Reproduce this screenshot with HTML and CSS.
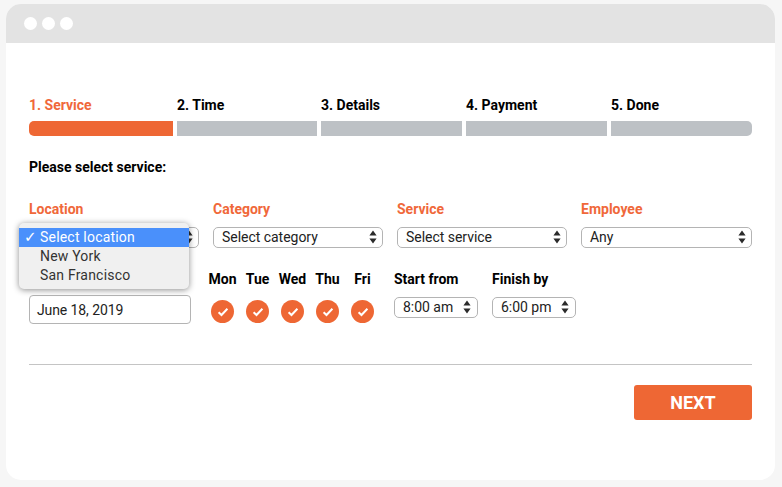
FILE: index.html
```html
<!DOCTYPE html>
<html lang="en">
<head>
<meta charset="utf-8">
<title>Booking</title>
<link rel="stylesheet" href="styles.css">
</head>
<body>
<svg class="defs" width="0" height="0" aria-hidden="true">
  <symbol id="arrows" viewBox="0 0 8 14"><path d="M4 0.5 7.6 5.6H0.4ZM4 13.5 0.4 8.4H7.6Z"/></symbol>
  <symbol id="tick" viewBox="0 0 12 10"><path d="M1.6 5.2 4.5 8 10.4 1.8" fill="none" stroke="#fff" stroke-width="2"/></symbol>
</svg>
<main class="window">
  <header class="titlebar">
    <span class="dot"></span><span class="dot"></span><span class="dot"></span>
  </header>
  <div class="content">
    <ol class="steps">
      <li class="step active"><span class="step-label">1. Service</span><span class="step-bar"></span></li>
      <li class="step"><span class="step-label">2. Time</span><span class="step-bar"></span></li>
      <li class="step"><span class="step-label">3. Details</span><span class="step-bar"></span></li>
      <li class="step"><span class="step-label">4. Payment</span><span class="step-bar"></span></li>
      <li class="step"><span class="step-label">5. Done</span><span class="step-bar"></span></li>
    </ol>
    <p class="prompt">Please select service:</p>
    <div class="filters">
      <div class="field location">
        <label class="accent-label">Location</label>
        <div class="select"><span></span><svg class="arrows"><use href="#arrows"/></svg></div>
        <ul class="popup">
          <li class="option selected"><span class="check">✓</span>Select location</li>
          <li class="option">New York</li>
          <li class="option">San Francisco</li>
        </ul>
      </div>
      <div class="field">
        <label class="accent-label">Category</label>
        <div class="select"><span>Select category</span><svg class="arrows"><use href="#arrows"/></svg></div>
      </div>
      <div class="field">
        <label class="accent-label">Service</label>
        <div class="select"><span>Select service</span><svg class="arrows"><use href="#arrows"/></svg></div>
      </div>
      <div class="field">
        <label class="accent-label">Employee</label>
        <div class="select"><span>Any</span><svg class="arrows"><use href="#arrows"/></svg></div>
      </div>
    </div>
    <div class="schedule">
      <div class="date-input">June 18, 2019</div>
      <div class="days">
        <div class="day"><span class="day-name">Mon</span><span class="tick"><svg><use href="#tick"/></svg></span></div>
        <div class="day"><span class="day-name">Tue</span><span class="tick"><svg><use href="#tick"/></svg></span></div>
        <div class="day"><span class="day-name">Wed</span><span class="tick"><svg><use href="#tick"/></svg></span></div>
        <div class="day"><span class="day-name">Thu</span><span class="tick"><svg><use href="#tick"/></svg></span></div>
        <div class="day"><span class="day-name">Fri</span><span class="tick"><svg><use href="#tick"/></svg></span></div>
      </div>
      <div class="time">
        <span class="time-label">Start from</span>
        <div class="select"><span>8:00 am</span><svg class="arrows"><use href="#arrows"/></svg></div>
      </div>
      <div class="time">
        <span class="time-label">Finish by</span>
        <div class="select"><span>6:00 pm</span><svg class="arrows"><use href="#arrows"/></svg></div>
      </div>
    </div>
    <hr class="divider">
    <div class="actions"><button class="next" type="button">NEXT</button></div>
  </div>
</main>
</body>
</html>
```
FILE: styles.css
```css
* { box-sizing: border-box; }
html, body { margin: 0; height: 100%; }
body {
  background: #f6f6f6;
  padding: 4px 7px 7px 6px;
  font-family: Roboto, "Liberation Sans", sans-serif;
  font-size: 14px;
  color: #000;
  overflow: hidden;
}
.defs { position: absolute; }
.window {
  height: 476px;
  background: #fff;
  border-radius: 15px;
  overflow: hidden;
}
.titlebar {
  height: 39px;
  background: #e3e3e3;
  display: flex;
  align-items: center;
  gap: 5px;
  padding-left: 18px;
}
.dot { width: 13px; height: 13px; border-radius: 50%; background: #fff; }
.content { padding: 54px 23px 0; }
.steps {
  list-style: none;
  margin: 0;
  padding: 0;
  display: grid;
  grid-template-columns: 144px 140px 141px 141px 141px;
  column-gap: 4px;
}
.step { display: flex; flex-direction: column; }
.step-label {
  font-weight: 700;
  font-size: 14px;
  line-height: 17px;
  height: 24px;
}
.step-bar { height: 15px; background: #bdc1c5; }
.step:first-child .step-bar { border-radius: 5px 0 0 5px; }
.step:last-child .step-bar { border-radius: 0 5px 5px 0; }
.step.active .step-label { color: #f0683a; }
.step.active .step-bar { background: #ee6734; }
.prompt {
  margin: 23px 0 0;
  font-weight: 700;
  font-size: 14px;
  line-height: 17px;
}
.filters {
  display: grid;
  grid-template-columns: 170px 170px 170px 171px;
  column-gap: 14px;
  margin-top: 25px;
}
.field { position: relative; }
.accent-label {
  display: block;
  font-weight: 700;
  font-size: 14px;
  line-height: 17px;
  height: 26px;
  color: #f0683a;
}
.select {
  height: 21px;
  border: 1px solid #b4b4b4;
  border-radius: 5px;
  background: #fff;
  display: flex;
  align-items: center;
  justify-content: space-between;
  padding: 0 5px 1px 8px;
  font-size: 14px;
  letter-spacing: -0.03px;
  color: #222;
}
.arrows { width: 8px; height: 14px; fill: #2b2b2b; flex: none; }
.popup {
  position: absolute;
  left: -10px;
  top: 22px;
  width: 170px;
  height: 66px;
  margin: 0;
  padding: 5px 0 0;
  list-style: none;
  background: #f0f0f0;
  border-radius: 5px;
  box-shadow: 0 1px 6px rgba(0, 0, 0, 0.45);
}
.option {
  position: relative;
  height: 19px;
  line-height: 18px;
  padding-left: 21px;
  font-size: 14px;
  letter-spacing: 0.2px;
  color: #333;
}
.option.selected { background: #4a90fb; color: #fff; }
.check { position: absolute; left: 5px; top: 0; font-size: 15px; font-weight: 700; font-family: "DejaVu Sans", sans-serif; }
.schedule {
  display: flex;
  margin-top: 23px;
  align-items: flex-start;
}
.date-input {
  width: 162px;
  height: 29px;
  margin-top: 24px;
  border: 1px solid #b4b4b4;
  border-radius: 4px;
  padding: 1px 0 0 7px;
  line-height: 27px;
  font-size: 14px;
  letter-spacing: -0.1px;
  color: #222;
}
.days {
  display: flex;
  gap: 12px;
  margin-left: 20px;
}
.day {
  width: 23px;
  display: flex;
  flex-direction: column;
  align-items: center;
}
.day-name {
  font-weight: 700;
  font-size: 14px;
  line-height: 17px;
  white-space: nowrap;
}
.tick {
  width: 23px;
  height: 23px;
  margin-top: 12px;
  border-radius: 50%;
  background: #ee6734;
  display: flex;
  align-items: center;
  justify-content: center;
}
.tick svg { width: 12px; height: 10px; }
.time { width: 84px; margin-left: 14px; }
.days + .time { margin-left: 20px; }
.time-label {
  display: block;
  font-weight: 700;
  font-size: 14px;
  line-height: 17px;
  height: 26px;
  white-space: nowrap;
}
.time .select { padding: 0 6px 1px 8px; }
.divider {
  border: 0;
  height: 1px;
  background: #c4c4c4;
  margin: 40px 0 0;
}
.actions { display: flex; justify-content: flex-end; margin-top: 20px; }
.next {
  width: 118px;
  height: 35px;
  border: 0;
  border-radius: 3px;
  background: #ee6734;
  color: #fff;
  font: 700 18px Roboto, "Liberation Sans", sans-serif;
}
```
